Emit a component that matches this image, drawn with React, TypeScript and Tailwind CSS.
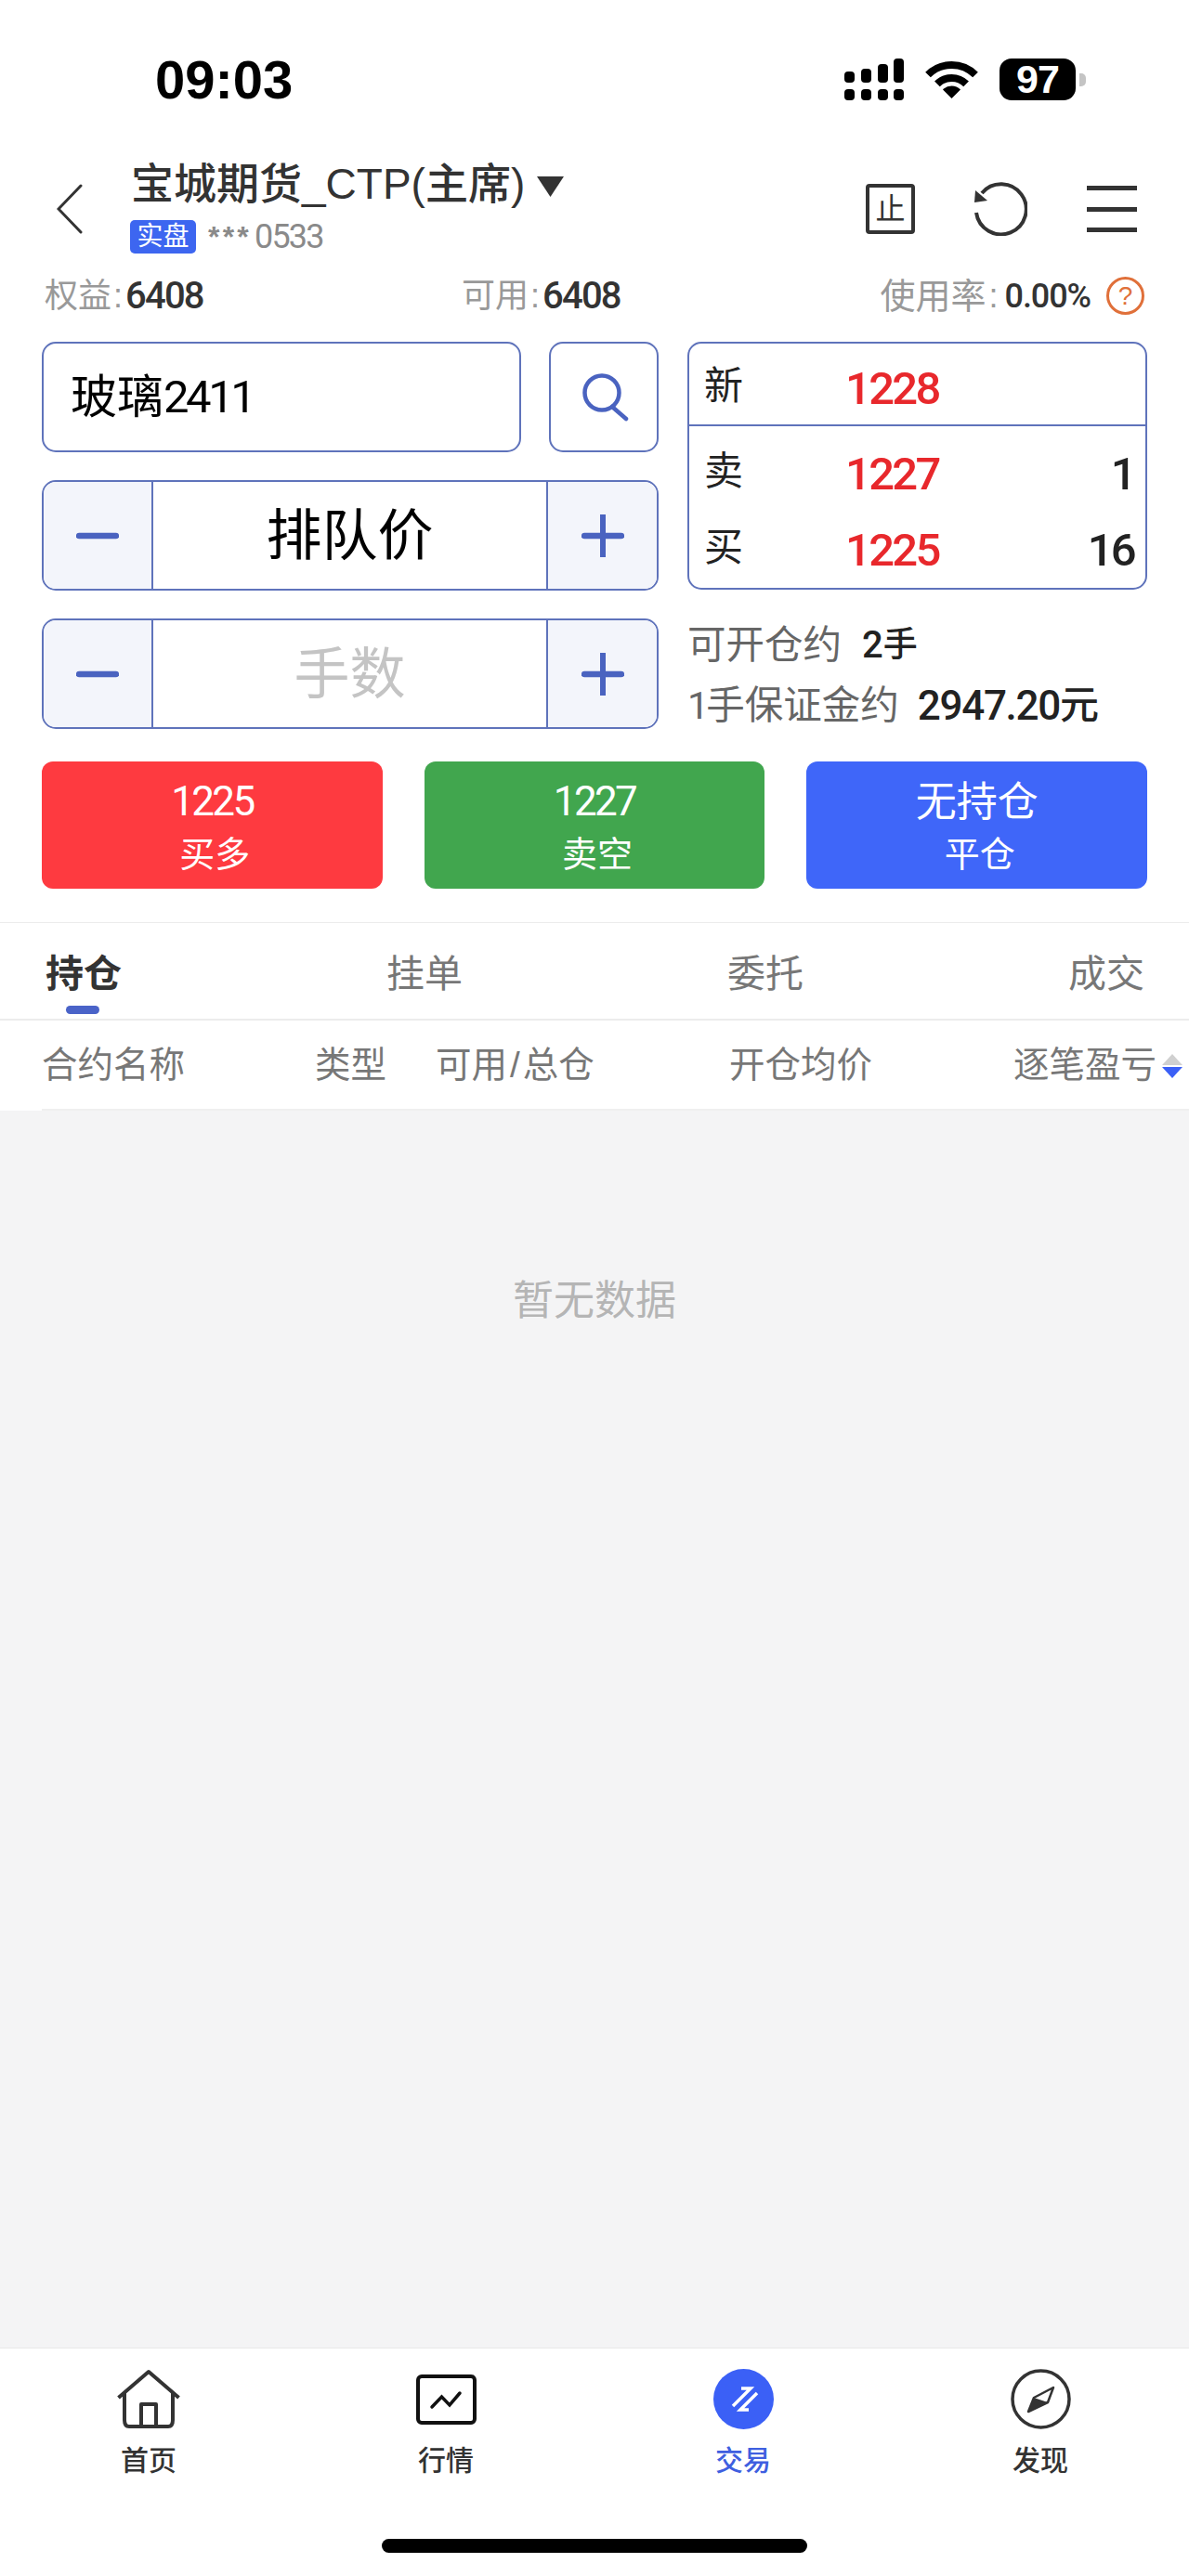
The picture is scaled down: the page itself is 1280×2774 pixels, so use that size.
import React from "react";

const digitFont = "[font-family:Roboto,'Liberation_Sans',sans-serif]";

function SignalIcon() {
  const cols = [0, 18, 36, 53];
  const tops = [14, 11, 6, 0];
  return (
    <svg width="65" height="45" viewBox="0 0 65 45" fill="#000">
      {cols.map((x, i) => (
        <g key={x}>
          <rect x={x} y={tops[i]} width="11" height={26 - tops[i]} rx="4" />
          <rect x={x} y="33" width="11" height="12" rx="4" />
        </g>
      ))}
    </svg>
  );
}

function WifiIcon() {
  return (
    <svg width="57" height="41" viewBox="0 0 57 41" fill="none" stroke="#000" strokeWidth="8">
      <path d="M3 15.5A36 36 0 0 1 54 15.5" />
      <path d="M12.9 25.4A22 22 0 0 1 44.1 25.4" />
      <path d="M28.5 41L19 31.5A13.4 13.4 0 0 1 38 31.5Z" fill="#000" stroke="none" />
    </svg>
  );
}

function Battery() {
  return (
    <div className="flex items-center gap-[4px]">
      <div className="w-[82px] h-[45px] rounded-[13px] bg-black text-white flex items-center justify-center text-[43px] leading-none font-bold tracking-[-0.02em]">
        97
      </div>
      <div className="w-[7px] h-[14px] rounded-r-[5px] bg-[#c4c4c4]" />
    </div>
  );
}

function StepButton({ kind }: { kind: "minus" | "plus" }) {
  const isPlus = kind === "plus";
  return (
    <div
      className={
        isPlus
          ? "w-[119px] h-full flex items-center justify-center bg-[#f3f5fb] border-l-2 border-[#5f73bb]"
          : "w-[118px] h-full flex items-center justify-center bg-[#f3f5fb] border-r-2 border-[#5f73bb]"
      }
    >
      <svg width="46" height="46" viewBox="0 0 46 46" fill="none" stroke="#4a63c0" strokeLinecap="round">
        <path d="M3 23H43" strokeWidth="6.5" />
        {isPlus && <path d="M23 1V45" strokeWidth="6" />}
      </svg>
    </div>
  );
}

function Stepper({ children }: { children: React.ReactNode }) {
  return (
    <div className="h-[119px] flex overflow-hidden rounded-[15px] border-2 border-[#5f73bb]">
      <StepButton kind="minus" />
      <div className="flex-1 flex items-center justify-center pt-[2px] text-[60px] leading-none">{children}</div>
      <StepButton kind="plus" />
    </div>
  );
}

function QuoteRow({ label, price, size }: { label: string; price: string; size?: string }) {
  return (
    <div className="flex items-center h-[42px] pl-[16px] pr-[12px] text-[42px] leading-none">
      <span className="w-[152px] text-[#222]">{label}</span>
      <span className={`${digitFont} pt-[4px] text-[#e8282c] text-[49px] font-medium tracking-[-0.055em]`}>{price}</span>
      <span className={`${digitFont} pt-[4px] ml-auto text-[#222] text-[49px] font-medium tracking-[-0.055em]`}>{size}</span>
    </div>
  );
}

function HomeIcon() {
  return (
    <svg width="68" height="65" viewBox="0 0 68 65" fill="none" stroke="#333" strokeWidth="4" strokeLinejoin="round">
      <path d="M1.5 31L34 3L66.5 31" />
      <path d="M8 25V55Q8 62 13 62H55Q60 62 60 55V25" />
      <path d="M26 62V38H42V62" />
    </svg>
  );
}

function ChartIcon() {
  return (
    <svg width="65" height="65" viewBox="0 0 65 65" fill="none" stroke="#111" strokeLinecap="round">
      <rect x="2" y="8" width="61" height="50" rx="4" strokeWidth="4" />
      <path d="M17 41L27.5 30L36 39L47 26" strokeWidth="3.5" />
    </svg>
  );
}

function TradeIcon() {
  return (
    <svg width="65" height="65" viewBox="0 0 65 65">
      <circle cx="32.5" cy="32.5" r="32.5" fill="#3b60f6" />
      <path d="M30 21H40L21 40" fill="none" stroke="#fff" strokeWidth="3.5" />
      <path d="M47 26L29 44H38" fill="none" stroke="#fff" strokeWidth="3.5" />
    </svg>
  );
}

function CompassIcon() {
  return (
    <svg width="65" height="65" viewBox="0 0 65 65" fill="none" stroke="#333">
      <circle cx="32.5" cy="32.5" r="30.5" strokeWidth="3.5" />
      <path d="M19 46L25 31L46 20L40 36Z" strokeWidth="2.5" strokeLinejoin="round" />
      <path d="M19 46L25 31L40 36Z" fill="#333" stroke="none" />
    </svg>
  );
}

const tabs = ["持仓", "挂单", "委托", "成交"];
const nav = [
  { label: "首页", icon: <HomeIcon /> },
  { label: "行情", icon: <ChartIcon /> },
  { label: "交易", icon: <TradeIcon />, active: true },
  { label: "发现", icon: <CompassIcon /> },
];

export default function App() {
  return (
    <div className="w-[1280px] h-[2774px] flex flex-col bg-white text-[#333] [font-family:'Liberation_Sans','Noto_Sans_CJK_SC',sans-serif]">
      {/* status bar */}
      <div className="h-[170px] shrink-0 flex items-start justify-between pt-[63px] pl-[167px] pr-[111px]">
        <span className="text-[58px] leading-[46px] font-bold text-black">09:03</span>
        <div className="flex items-center">
          <SignalIcon />
          <div className="ml-[22px] mr-[23px]">
            <WifiIcon />
          </div>
          <Battery />
        </div>
      </div>

      {/* account header */}
      <div className="h-[114px] shrink-0 flex items-start pl-[61px] pr-[56px]">
        <svg className="mt-[28px] shrink-0" width="28" height="54" viewBox="0 0 28 54" fill="none" stroke="#333" strokeWidth="3" strokeLinecap="round">
          <path d="M26 2L2 27L26 52" />
        </svg>
        <div className="ml-[51px]">
          <div className="h-[56px] flex items-center text-[46px] leading-none font-medium whitespace-nowrap">
            <span className="ml-[1px]">宝城期货_CTP(主席)</span>
            <svg className="ml-[12px] mt-[4px]" width="31" height="23" viewBox="0 0 31 23" fill="#333">
              <path d="M1 1H30L15.5 23Z" />
            </svg>
          </div>
          <div className="mt-[11px] flex items-center">
            <span className="w-[71px] h-[36px] rounded-[5px] bg-[#3d66f0] text-white text-[28px] leading-none flex items-center justify-center">实盘</span>
            <span className="ml-[13px] text-[32px] leading-none font-bold text-[#8a8a8a] tracking-[0.1em]">***</span>
            <span className={`${digitFont} ml-[3px] text-[36px] leading-none text-[#8a8a8a] tracking-[-0.05em]`}>0533</span>
          </div>
        </div>
        <div className="ml-auto mt-[26px] flex items-center gap-[64px]">
          <div className="w-[53px] h-[54px] rounded-[4px] border-[4px] border-[#333] flex items-center justify-center text-[32px] leading-none">止</div>
          <svg width="57" height="58" viewBox="0 0 57 58" fill="none" stroke="#333" strokeWidth="4">
            <path d="M8 12A27 27 0 1 1 2 33" />
            <path d="M0 22L1 9L14 20Z" fill="#333" stroke="none" />
          </svg>
          <div className="w-[54px] h-[50px] flex flex-col justify-between">
            <div className="h-[5px] bg-[#333]" />
            <div className="h-[5px] bg-[#333]" />
            <div className="h-[5px] bg-[#333]" />
          </div>
        </div>
      </div>

      {/* account figures */}
      <div className="h-[66px] shrink-0 flex items-center pt-[3px] pl-[48px] pr-[48px] text-[36px] leading-none whitespace-nowrap">
        <div className="w-[449px] flex items-center">
          <span className="text-[#999]">权益</span>
          <span className="ml-[2px] text-[#999]">:</span>
          <span className={`${digitFont} ml-[3px] text-[40px] font-medium tracking-[-0.045em]`}>6408</span>
        </div>
        <div className="flex items-center">
          <span className="text-[#999]">可用</span>
          <span className="ml-[2px] text-[#999]">:</span>
          <span className={`${digitFont} ml-[3px] text-[40px] font-medium tracking-[-0.045em]`}>6408</span>
        </div>
        <div className="ml-auto flex items-center">
          <span className="text-[38px] text-[#999]">使用率</span>
          <span className="ml-[3px] text-[#999]">:</span>
          <span className={`${digitFont} ml-[7px] text-[36px] font-medium tracking-[-0.03em]`}>0.00%</span>
          <span className="ml-[17px] w-[41px] h-[41px] rounded-full border-[3px] border-[#e0703a] text-[#e0703a] text-[28px] flex items-center justify-center">?</span>
        </div>
      </div>

      {/* order form and quote */}
      <div className="mt-[18px] px-[45px] flex gap-[31px] shrink-0">
        <div className="w-[664px] flex flex-col gap-[30px]">
          <div className="flex gap-[30px] h-[119px]">
            <div className="w-[516px] rounded-[15px] border-2 border-[#5f73bb] flex items-center pl-[29px] text-black text-[50px] leading-none">
              玻璃<span className={`${digitFont} text-[49px] tracking-[-0.07em]`}>2411</span>
            </div>
            <div className="w-[118px] rounded-[15px] border-2 border-[#5f73bb] flex items-center justify-center">
              <svg className="ml-[3px]" width="50" height="52" viewBox="0 0 50 52" fill="none" stroke="#4a63c0" strokeWidth="4.5" strokeLinecap="round">
                <circle cx="21" cy="21" r="18.5" />
                <path d="M32 36L47 49" />
              </svg>
            </div>
          </div>
          <Stepper>
            <span className="text-black">排队价</span>
          </Stepper>
          <Stepper>
            <span className="text-[#c4c4c4]">手数</span>
          </Stepper>
        </div>

        <div className="w-[495px]">
          <div className="h-[267px] rounded-[15px] border-2 border-[#5f73bb] flex flex-col">
            <div className="h-[89px] flex items-center pt-[5px] border-b-2 border-[#5f73bb]">
              <div className="w-full">
                <QuoteRow label="新" price="1228" />
              </div>
            </div>
            <div className="flex-1 flex flex-col pt-[28px] gap-[40px]">
              <QuoteRow label="卖" price="1227" size="1" />
              <QuoteRow label="买" price="1225" size="16" />
            </div>
          </div>
          <div className="mt-[37px] text-[41.5px] leading-[46px] text-[#666] whitespace-nowrap">
            <div className="flex items-center">
              <span>可开仓约</span>
              <span className="ml-[22px] flex items-center text-[#222] text-[37px] font-medium">
                <span className={`${digitFont} text-[40px]`}>2</span>手
              </span>
            </div>
            <div className="mt-[19px] flex items-center">
              <span className={`${digitFont} -mr-[3px]`}>1</span>
              <span>手保证金约</span>
              <span className={`${digitFont} ml-[20px] text-[#222] text-[44px] font-medium tracking-[-0.03em]`}>2947.20</span>
              <span className="text-[#222] text-[42px] font-medium">元</span>
            </div>
          </div>
        </div>
      </div>

      {/* order buttons */}
      <div className="mt-[35px] px-[45px] grid grid-cols-3 gap-[45px] shrink-0 text-white">
        <div className="h-[137px] pt-[6px] rounded-[12px] bg-[#fe3a40] flex flex-col items-center justify-center">
          <span className={`${digitFont} text-[44px] leading-[46px] tracking-[-0.06em]`}>1225</span>
          <span className="mt-[11px] ml-[6px] text-[38px] leading-[46px]">买多</span>
        </div>
        <div className="h-[137px] pt-[6px] rounded-[12px] bg-[#41a64e] flex flex-col items-center justify-center">
          <span className={`${digitFont} text-[44px] leading-[46px] tracking-[-0.06em]`}>1227</span>
          <span className="mt-[11px] ml-[6px] text-[38px] leading-[46px]">卖空</span>
        </div>
        <div className="h-[137px] pt-[6px] rounded-[12px] bg-[#3f66f9] flex flex-col items-center justify-center">
          <span className="text-[44px] leading-[46px]">无持仓</span>
          <span className="mt-[10px] ml-[6px] text-[38px] leading-[46px]">平仓</span>
        </div>
      </div>

      {/* record tabs */}
      <div className="mt-[36px] h-[106px] shrink-0 border-y border-y-[#ececec] border-b-2 flex justify-between pl-[49px] pr-[48px]">
        {tabs.map((t, i) => (
          <div key={t} className="relative w-[82px] text-center pt-[30px]">
            <span className={i === 0 ? "text-[41px] leading-[50px] font-bold text-[#333]" : "text-[41px] leading-[50px] text-[#777]"}>{t}</span>
            {i === 0 && <div className="absolute left-[22px] bottom-[5px] w-[36px] h-[9px] rounded-full bg-[#4a63c8]" />}
          </div>
        ))}
      </div>

      {/* column headings */}
      <div className="h-[97px] shrink-0 pl-[45px]">
        <div className="h-full pt-[2px] border-b-2 border-[#efefef] grid grid-cols-[294px_130px_316px_306px_1fr] items-center text-[38.5px] leading-none text-[#777] whitespace-nowrap">
          <span>合约名称</span>
          <span>类型</span>
          <span className="flex items-center">
            可用<span className="mx-[3px]">/</span>总仓
          </span>
          <span>开仓均价</span>
          <div className="flex items-center">
            <span>逐笔盈亏</span>
            <svg className="ml-[6px]" width="22" height="26" viewBox="0 0 22 26">
              <path d="M11 0L22 12H0Z" fill="#d0d0d0" />
              <path d="M0 14H22L11 26Z" fill="#3b60f6" />
            </svg>
          </div>
        </div>
      </div>

      {/* position list */}
      <div className="flex-1 bg-[#f4f4f5] text-center pt-[175px]">
        <span className="text-[44px] leading-[60px] text-[#b5b5b5]">暂无数据</span>
      </div>

      {/* tab bar */}
      <div className="h-[246px] shrink-0 bg-white border-t border-[#e8e8e8] pt-[22px]">
        <div className="grid grid-cols-4">
          {nav.map((n) => (
            <div key={n.label} className="flex flex-col items-center">
              {n.icon}
              <span className={n.active ? "mt-[14px] text-[30px] leading-[40px] font-medium text-[#3f5fe0]" : "mt-[14px] text-[30px] leading-[40px] font-medium text-[#333]"}>{n.label}</span>
            </div>
          ))}
        </div>
        <div className="mt-[64px] mx-auto w-[458px] h-[15px] rounded-full bg-black" />
      </div>
    </div>
  );
}
